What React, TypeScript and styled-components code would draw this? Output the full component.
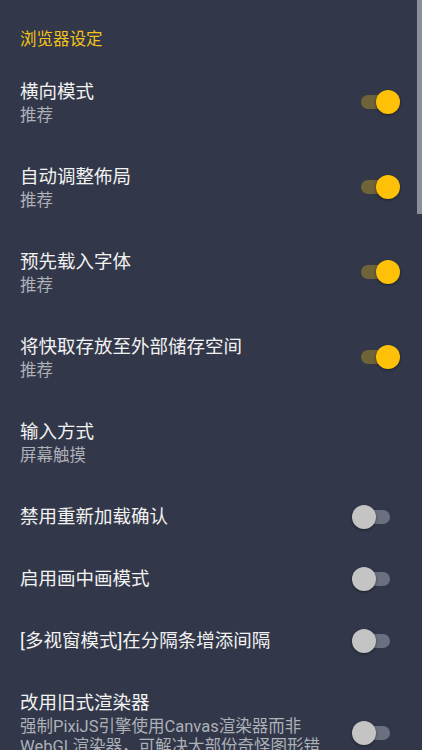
import styled, { createGlobalStyle } from "styled-components";

const GlobalStyle = createGlobalStyle`
  html, body {
    margin: 0;
    padding: 0;
    background-color: #323849;
    overflow: hidden;
  }
  body {
    font-family: Roboto, "Noto Sans CJK SC", sans-serif;
  }
`;

const Screen = styled.div`
  position: relative;
  width: 422px;
  height: 750px;
  background-color: #323849;
  overflow: hidden;
`;

const ScrollThumb = styled.div`
  position: absolute;
  top: 0;
  right: 0;
  width: 5px;
  height: 214px;
  background-color: #8a8f9c;
`;

const Header = styled.div`
  padding: 28px 20px 6.5px;
  height: 24px;
  line-height: 24px;
  font-size: 16.5px;
  color: #f4c21a;
`;

const Row = styled.div<{ $single?: boolean }>`
  display: flex;
  align-items: center;
  gap: 20px;
  padding: ${(p) => (p.$single ? "20px 23px 15px 20px" : "20px 23px 18px 20px")};
`;

const Texts = styled.div`
  flex: 1;
  min-width: 0;
`;

const Title = styled.div`
  font-size: 18.5px;
  line-height: 27px;
  color: #f2f2f2;
`;

const Sub = styled.div`
  font-size: 16.5px;
  line-height: 20px;
  color: #aeb1b8;
`;

const Switch = styled.div`
  position: relative;
  flex: none;
  width: 47px;
  height: 24px;
`;

const Track = styled.div<{ $on: boolean }>`
  position: absolute;
  top: 5px;
  left: ${(p) => (p.$on ? "9px" : "1px")};
  width: 37px;
  height: 14px;
  border-radius: 7px;
  background-color: ${(p) => (p.$on ? "#6f6338" : "#6a7080")};
`;

const Thumb = styled.div<{ $on: boolean }>`
  position: absolute;
  top: 0;
  left: ${(p) => (p.$on ? "24px" : "0")};
  width: 24px;
  height: 24px;
  border-radius: 50%;
  background-color: ${(p) => (p.$on ? "#ffc107" : "#c4c4c4")};
  box-shadow: 0 1px 3px rgba(0, 0, 0, 0.45);
`;

type Pref = {
  title: string;
  sub?: string;
  toggle?: boolean;
};

const prefs: Pref[] = [
  { title: "横向模式", sub: "推荐", toggle: true },
  { title: "自动调整佈局", sub: "推荐", toggle: true },
  { title: "预先载入字体", sub: "推荐", toggle: true },
  { title: "将快取存放至外部储存空间", sub: "推荐", toggle: true },
  { title: "输入方式", sub: "屏幕触摸" },
  { title: "禁用重新加载确认", toggle: false },
  { title: "启用画中画模式", toggle: false },
  { title: "[多视窗模式]在分隔条增添间隔", toggle: false },
  {
    title: "改用旧式渲染器",
    sub: "强制PixiJS引擎使用Canvas渲染器而非WebGL渲染器，可解决大部份奇怪图形错误问题",
    toggle: false,
  },
];

const Toggle = ({ on }: { on: boolean }) => (
  <Switch>
    <Track $on={on} />
    <Thumb $on={on} />
  </Switch>
);

export default function App() {
  return (
    <Screen>
      <GlobalStyle />
      <Header>浏览器设定</Header>
      {prefs.map((p) => (
        <Row key={p.title} $single={!p.sub}>
          <Texts>
            <Title>{p.title}</Title>
            {p.sub && <Sub>{p.sub}</Sub>}
          </Texts>
          {p.toggle !== undefined && <Toggle on={p.toggle} />}
        </Row>
      ))}
      <ScrollThumb />
    </Screen>
  );
}
